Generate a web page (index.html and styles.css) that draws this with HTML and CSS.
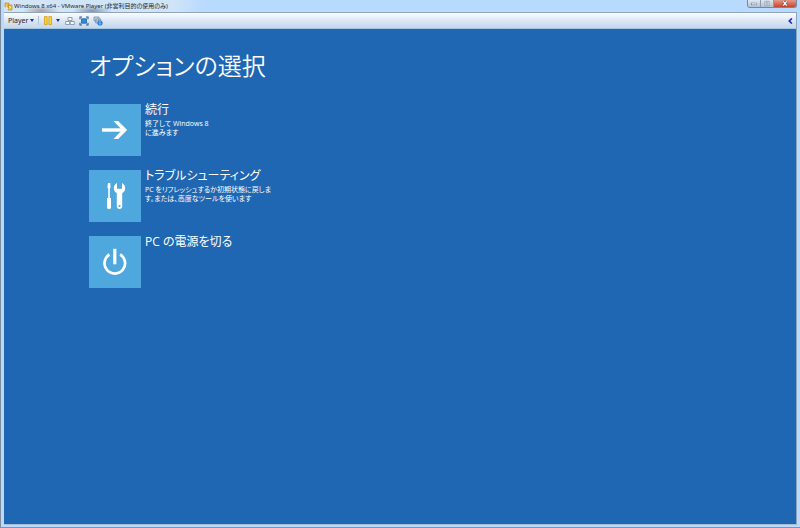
FILE: index.html
```
<!DOCTYPE html>
<html lang="ja">

<head>
    <meta charset="UTF-8">
    <title>Windows 8 x64 - VMware Player</title>
    <link rel="stylesheet" href="styles.css">
</head>

<body>
    <div class="window">

        <!-- Title bar -->
        <header class="titlebar">
            <svg class="app-icon" viewBox="0 0 9 9">
                <path d="M1 1h4v4H1zM4 3h4v5H4z" fill="#f5c247" stroke="#b9852b" stroke-width=".7" />
                <path d="M2 4l2 3M5 4l2 2" stroke="#fff1b0" stroke-width="1" />
            </svg>
            <span class="title">Windows 8 x64 - VMware Player (非営利目的の使用のみ)</span>
            <div class="window-buttons">
                <button class="win-btn" aria-label="最小化">
                    <svg viewBox="0 0 14 8"><rect x="4" y="3.5" width="6" height="2" fill="#fff" stroke="#657488" stroke-width=".6" /></svg>
                </button>
                <button class="win-btn" aria-label="最大化">
                    <svg viewBox="0 0 14 8"><path d="M4.5 1.5h5v5h-5zM6 3h2v2H6z" fill="#eef2f6" stroke="#7b8795" stroke-width=".7" /></svg>
                </button>
                <button class="win-btn close" aria-label="閉じる">
                    <svg viewBox="0 0 14 8"><path d="M5 1.5l4 5M9 1.5l-4 5" stroke="#5d4a50" stroke-width="2.6" /><path d="M5 1.5l4 5M9 1.5l-4 5" stroke="#fff" stroke-width="1.5" /></svg>
                </button>
            </div>
        </header>

        <div class="client">
            <!-- Toolbar -->
            <nav class="toolbar">
                <button class="player-menu">Player<span class="caret"></span></button>
                <span class="separator"></span>
                <button class="pause-menu" aria-label="一時停止">
                    <svg viewBox="0 0 8 9"><path d="M.5.5h2.6v8H.5zM4.9.5h2.6v8H4.9z" fill="#ffd52e" stroke="#cf9d1b" stroke-width=".8" /></svg>
                    <span class="caret"></span>
                </button>
                <button class="tool" aria-label="Ctrl+Alt+Del">
                    <svg viewBox="0 0 10 10"><path d="M3 1.5h4v3H3zM.7 5.5h4v3h-4zM5.3 5.5h4v3h-4z" fill="#f7f9fb" stroke="#8a95a3" stroke-width=".9" /></svg>
                </button>
                <button class="tool" aria-label="全画面">
                    <svg viewBox="0 0 10 10"><path d="M2.5 2.8h5v4.4h-5z" fill="#2d8be0" stroke="#1f5fa8" stroke-width=".8" /><path d="M1 3.2V1h2M7 1h2v2.2M9 6.8V9H7M3 9H1V6.8" fill="none" stroke="#335c86" stroke-width="1.1" /></svg>
                </button>
                <button class="tool" aria-label="ユニティ">
                    <svg viewBox="0 0 10 10"><path d="M1 1h5v4H1zM2.7 3h5v4h-5z" fill="#c4d3e2" stroke="#7890aa" stroke-width=".8" /><circle cx="7" cy="7" r="2.6" fill="#2380dc" /><path d="M7 6.5v2M7 5.1v.8" stroke="#fff" stroke-width=".8" /></svg>
                </button>
                <button class="collapse" aria-label="ツールバーを隠す">
                    <svg viewBox="0 0 5 6"><path d="M3.9.5L1.3 3l2.6 2.5" fill="none" stroke="#2b2bd0" stroke-width="1.7" /></svg>
                </button>
            </nav>

            <!-- Guest screen -->
            <main class="screen">
                <h1>オプションの選択</h1>
                <div class="options">
                    <button class="option">
                        <span class="tile">
                            <svg viewBox="0 0 52 52"><path d="M13 26h23" fill="none" stroke="#fff" stroke-width="3.4" /><path d="M24.5 17h4.6l9 9-9 9h-4.6l8.6-9z" fill="#fff" /></svg>
                        </span>
                        <span class="text">
                            <span class="name">続行</span>
                            <span class="detail">終了して Windows 8<br>に進みます</span>
                        </span>
                    </button>
                    <button class="option">
                        <span class="tile">
                            <svg viewBox="0 0 52 52">
                                <path d="M19 13h2.2l.4 4-.8 2v9H22v9.4q0 1.6-2 1.6t-2-1.6V28h1.2v-9l-.8-2z" fill="#fff" />
                                <path d="M28 13v5.7h5V13q3.2 1.8 3.2 5.3 0 3.2-3 4.8V36q0 3-2.7 3t-2.700-3V23.1q-3-1.6-3-4.8 0-3.500 3.200-5.300z" fill="#fff" />
                                <circle cx="30.5" cy="36" r="1.1" fill="#4fa8dd" />
                            </svg>
                        </span>
                        <span class="text">
                            <span class="name">トラブルシューティング</span>
                            <span class="detail">PC をリフレッシュするか初期状態に戻しま<br>す。または、高度なツールを使います</span>
                        </span>
                    </button>
                    <button class="option">
                        <span class="tile">
                            <svg viewBox="0 0 52 52"><path d="M20.5 18.500a10.300 10.300 0 1 0 10.600 0" fill="none" stroke="#fff" stroke-width="2.700" /><path d="M25.800 12.800v15.500" stroke="#fff" stroke-width="3.200" /></svg>
                        </span>
                        <span class="text">
                            <span class="name">PC の電源を切る</span>
                        </span>
                    </button>
                </div>
            </main>
        </div>
    </div>
</body>

</html>
```
FILE: styles.css
```
* {
    box-sizing: border-box;
}

body {
    margin: 0;
    font-family: "Open Sans", "Noto Sans CJK JP", sans-serif;
    font-feature-settings: "palt";
}

button {
    padding: 0;
    border: none;
    background: none;
    color: inherit;
    font: inherit;
    font-feature-settings: inherit;
}

svg {
    display: block;
}

.window {
    display: flex;
    flex-direction: column;
    min-height: 100vh;
    padding: 0 3px 2px;
    background-color: #b8dafe;
    border-left: 1px solid #7f8c99;
    border-bottom: 1px solid #7795b3;
}

/* Title bar */
.titlebar {
    display: flex;
    align-items: center;
    height: 12px;
    color: #182634;
    font-family: "Noto Sans", "Noto Sans CJK JP", sans-serif;
    font-size: 6px;
    line-height: 12px;
    background: radial-gradient(ellipse 18px 5px at 37px 11px, #a99fa5, transparent),
        radial-gradient(ellipse 20px 5px at 88px 11px, #8795a5, transparent),
        linear-gradient(to right, #d3e5f5, #cfe4f8 170px, #b8dafe 200px);
}

.app-icon {
    width: 9px;
    height: 9px;
    margin-right: 1px;
}

.window-buttons {
    display: flex;
    align-self: flex-start;
    margin-left: auto;
    border: 1px solid #77889b;
    border-top: none;
    border-radius: 0 0 3px 3px;
    overflow: hidden;
}

.win-btn {
    display: flex;
    justify-content: center;
    width: 13px;
    height: 7px;
    border-right: 1px solid #8c9bac;
    background: linear-gradient(#dfe8f1, #b3c1d0);
}

.win-btn svg {
    width: 14px;
    height: 7px;
    flex: none;
}

.win-btn.close {
    width: 22px;
    border-right: none;
    background: linear-gradient(#e39a8b, #c9432c);
}

.client {
    display: flex;
    flex: 1;
    flex-direction: column;
    border: 1px solid #8fa5bd;
    border-left: none;
    border-bottom-color: #a5bdd6;
}

/* Toolbar */
.toolbar {
    display: flex;
    align-items: center;
    height: 16px;
    padding: 0 3px 0 4px;
    color: #1b2430;
    font-family: "Noto Sans", sans-serif;
    font-size: 7px;
    background: linear-gradient(#fafcfe, #dce7f4 50%, #c3d7ec);
    border-bottom: 1px solid #a5c4e2;
}

.player-menu,
.pause-menu {
    display: flex;
    align-items: center;
    gap: 4px;
}

.player-menu {
    gap: 2px;
}

.pause-menu svg {
    width: 8px;
    height: 9px;
}

.caret {
    border: 2px solid transparent;
    border-top: 3px solid #1c2bb0;
    border-bottom: none;
}

.separator {
    width: 1px;
    height: 9px;
    margin: 0 5px 0 4px;
    background-color: #b4c2d2;
}

.tool {
    margin-left: 4px;
}

.pause-menu + .tool {
    margin-left: 5px;
}

.tool svg {
    width: 10px;
    height: 10px;
}

.collapse {
    margin-left: auto;
}

.collapse svg {
    width: 5px;
    height: 6px;
}

/* Guest screen */
.screen {
    flex: 1;
    padding: 19px 85px;
    color: #fff;
    background-color: #1f67b2;
}

h1 {
    margin: 0 0 20px;
    font-size: 24px;
    font-weight: 350;
    line-height: 36px;
}

.options {
    display: flex;
    flex-direction: column;
    align-items: flex-start;
    gap: 14px;
}

.option {
    display: flex;
    gap: 4px;
    text-align: left;
}

.tile {
    width: 52px;
    height: 52px;
    background-color: #4fa8dd;
}

.text {
    display: flex;
    flex-direction: column;
}

.name {
    margin-bottom: 3px;
    font-size: 12px;
    line-height: 12px;
}

.detail {
    font-size: 7px;
    line-height: 9px;
}
```
